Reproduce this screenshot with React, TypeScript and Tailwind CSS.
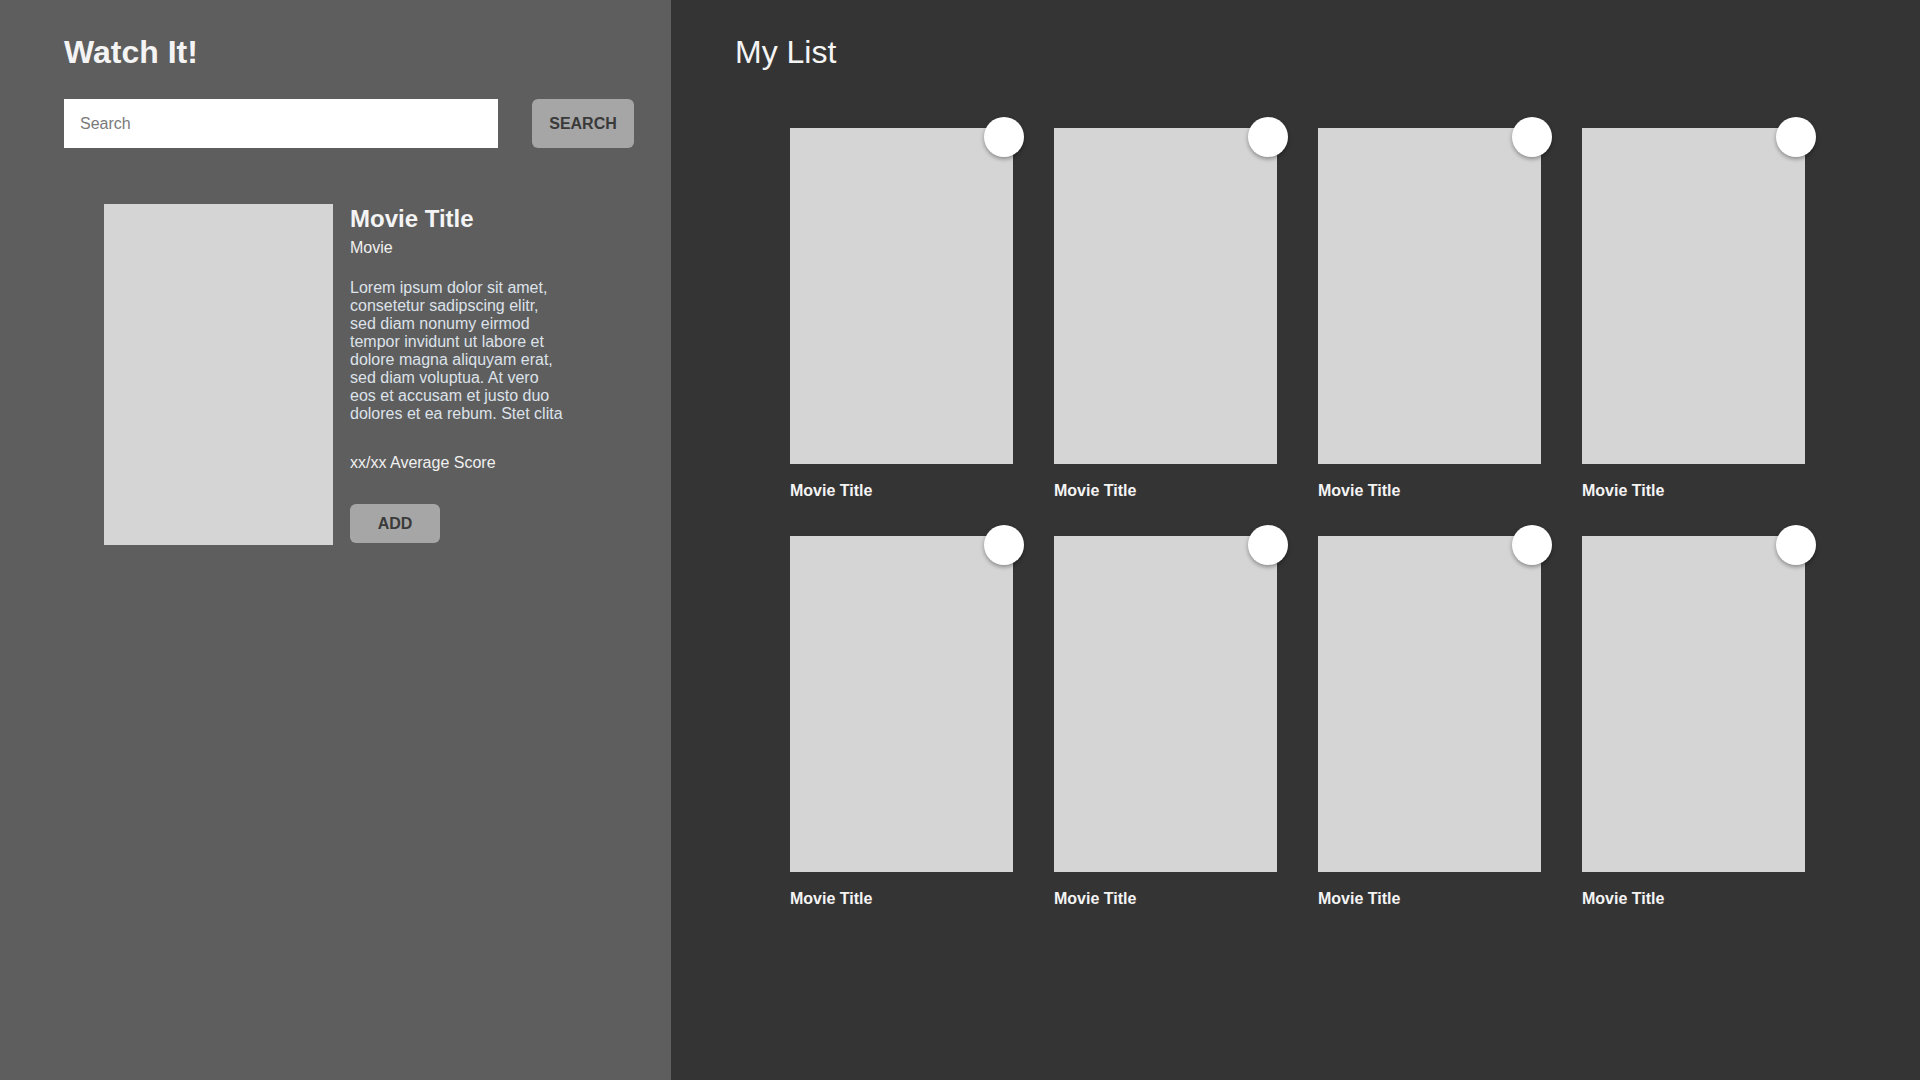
const movies = Array.from({ length: 8 }, (_, i) => ({ id: i + 1, title: "Movie Title" }));

const lorem =
  "Lorem ipsum dolor sit amet, consetetur sadipscing elitr, sed diam nonumy eirmod tempor invidunt ut labore et dolore magna aliquyam erat, sed diam voluptua. At vero eos et accusam et justo duo dolores et ea rebum. Stet clita";

function SearchPanel() {
  return (
    <aside className="w-[671px] shrink-0 bg-[#5e5e5e] pl-16 pr-[37px] pt-9">
      <h1 className="text-[32px] leading-[32px] font-bold text-[#f4f4f4]">Watch It!</h1>

      <div className="mt-[31px] flex items-center gap-[34px]">
        <input
          type="text"
          placeholder="Search"
          className="h-[49px] w-[434px] bg-white px-4 text-base text-[#333] placeholder:text-[#7a7a7a] outline-none"
        />
        <button className="h-[49px] w-[102px] rounded-md bg-[#a6a6a6] text-base font-bold text-[#3a3a3a]">
          SEARCH
        </button>
      </div>

      <div className="mt-[56px] ml-10 flex gap-[17px]">
        <div className="h-[341px] w-[229px] shrink-0 bg-[#d5d5d5]" />
        <div className="w-[216px] pt-[3px]">
          <h2 className="text-2xl leading-6 font-bold text-[#f4f4f4]">Movie Title</h2>
          <p className="mt-[9px] text-base leading-4 text-[#f0f0f0]">Movie</p>
          <p className="mt-[23px] text-base leading-[18px] text-[#dde2ea]">{lorem}</p>
          <p className="mt-[31px] text-base leading-[18px] text-[#f0f0f0]">xx/xx Average Score</p>
          <button className="mt-[32px] h-[39px] w-[90px] rounded-md bg-[#a6a6a6] text-base font-bold text-[#3a3a3a]">
            ADD
          </button>
        </div>
      </div>
    </aside>
  );
}

function MovieCard({ title }: { title: string }) {
  return (
    <div>
      <div className="relative h-[336px] w-[223px] bg-[#d5d5d5]">
        <div className="absolute -top-[11px] -right-[11px] h-10 w-10 rounded-full bg-white shadow-[0_2px_4px_rgba(0,0,0,0.35)]" />
      </div>
      <p className="mt-[19px] text-base leading-4 font-bold text-[#f4f4f4]">{title}</p>
    </div>
  );
}

export default function App() {
  return (
    <div className="flex min-h-screen w-full font-['Liberation_Sans',Arial,sans-serif]">
      <SearchPanel />

      <main className="flex-1 bg-[#343434] pl-16 pt-9">
        <h1 className="text-[32px] leading-[32px] font-normal text-[#f4f4f4]">My List</h1>
        <div className="mt-[60px] ml-[55px] grid w-[1015px] grid-cols-[repeat(4,223px)] gap-x-[41px] gap-y-[37px]">
          {movies.map((movie) => (
            <MovieCard key={movie.id} title={movie.title} />
          ))}
        </div>
      </main>
    </div>
  );
}
